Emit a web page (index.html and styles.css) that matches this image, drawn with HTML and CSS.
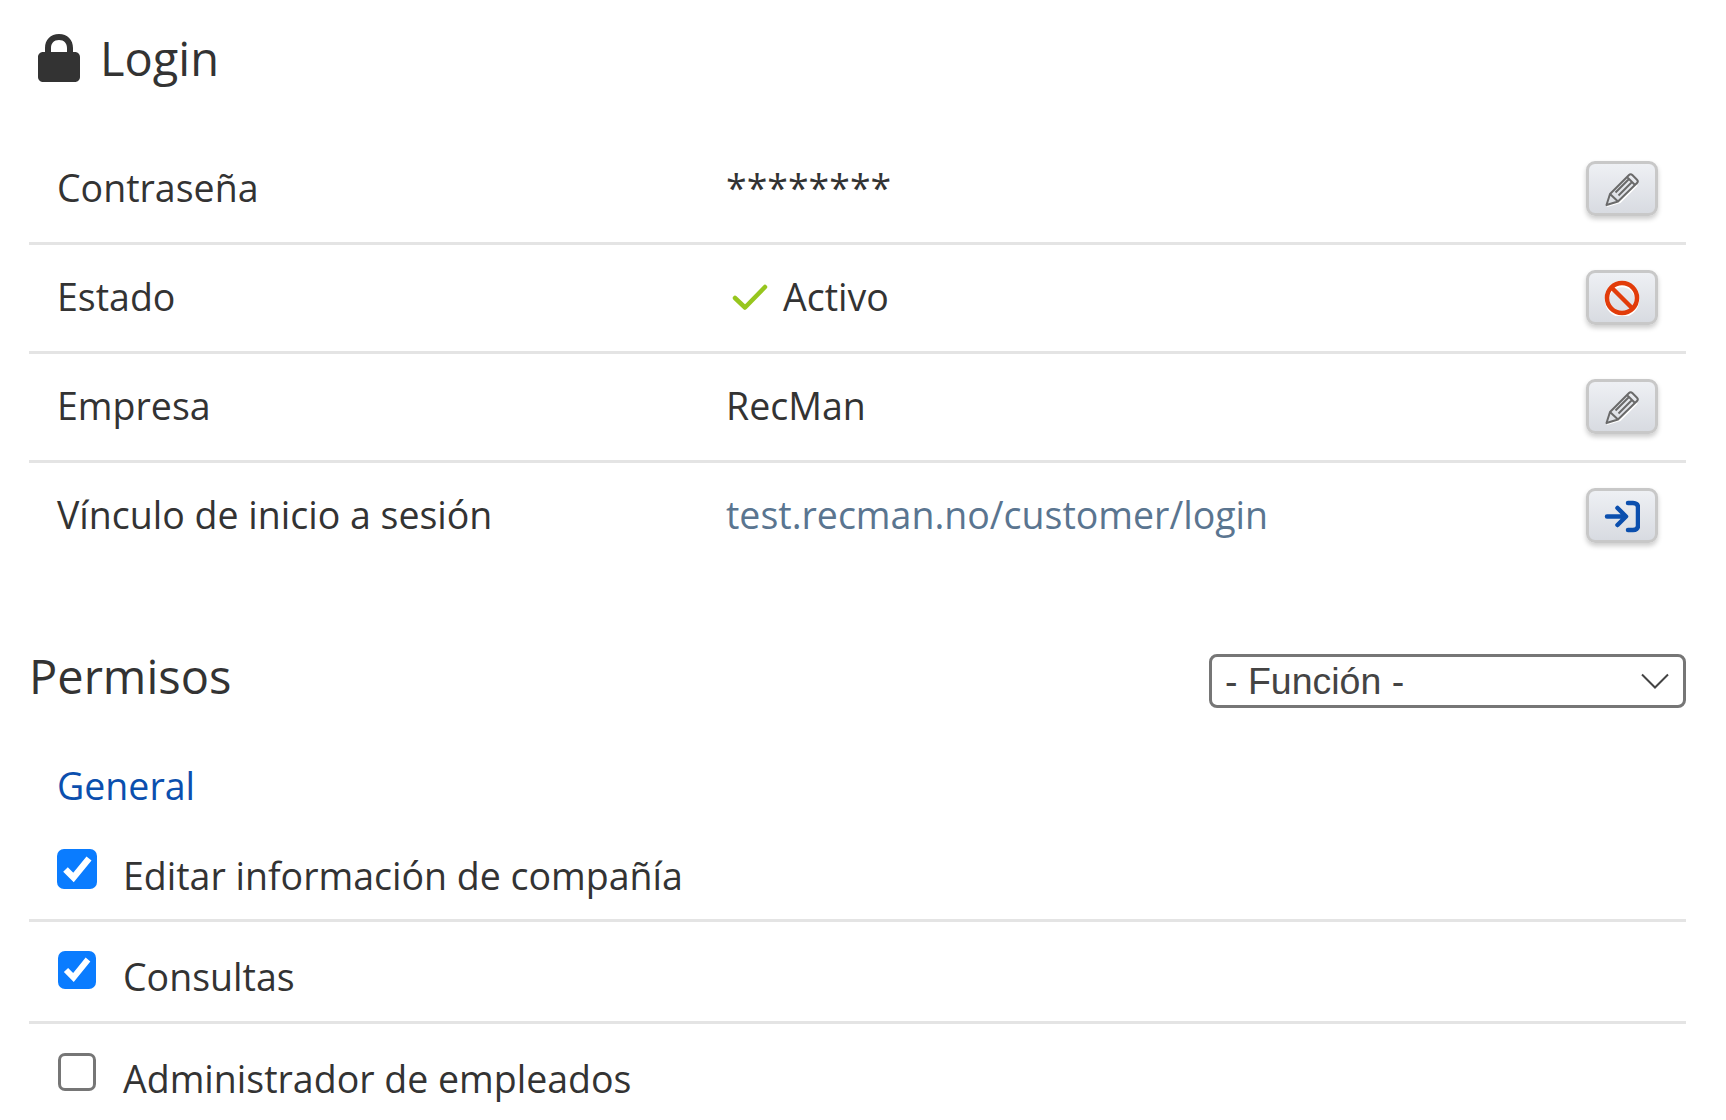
FILE: index.html
```html
<!DOCTYPE html>
<html lang="es">
  <head>
    <meta charset="UTF-8" />
    <meta name="viewport" content="width=device-width, initial-scale=1.0" />
    <title>Login</title>
    <link rel="stylesheet" href="styles.css">
  </head>
  <body>
    <div class="container">
      <h2 class="title">
        <svg class="lock" viewBox="0 0 42 48" width="42" height="48">
          <path fill="#333" d="M21 0C12.5 0 7 5.8 7 14v4H5c-2.8 0-5 2.2-5 5v20c0 2.800 2.200 5 5 5h32c2.800 0 5-2.200 5-5V23c0-2.800-2.200-5-5-5h-2v-4C35 5.800 29.500 0 21 0zm0 6c5.200 0 8 3.400 8 8v4H13v-4c0-4.600 2.800-8 8-8z"/>
        </svg>
        Login
      </h2>

      <div class="rows">
        <div class="row">
          <div class="label">Contraseña</div>
          <div class="value stars">********</div>
          <button class="btn" type="button">
            <svg viewBox="0 0 36 36" width="36" height="36">
              <path class="glow" d="M3 35l13-4 17-17"/>
              <path class="pencil" d="M2.500 34l3.500-11L25 4c1-1 2.300-1 3.300 0l4.700 4.700c1 1 1 2.300 0 3.300L14 30.500zM6 23l8 7.500M23 6l8 8M11.500 21.500L25.500 7.500M14.500 24.500L28.500 10.500"/>
            </svg>
          </button>
        </div>
        <div class="row">
          <div class="label">Estado</div>
          <div class="value status">
            <svg viewBox="0 0 36 28" width="36" height="28">
              <path d="M3 15l10 9.500L33 4" fill="none" stroke="#97c61e" stroke-width="4.500" stroke-linecap="round" stroke-linejoin="round"/>
            </svg>
            <span>Activo</span>
          </div>
          <button class="btn" type="button">
            <svg viewBox="0 0 36 36" width="36" height="36">
              <circle cx="18" cy="20" r="15" fill="none" stroke="white" stroke-width="4.500"/>
              <circle cx="18" cy="18" r="15" fill="none" stroke="#e23c0a" stroke-width="4.500"/>
              <path d="M7.500 7.500l21 21" stroke="#e23c0a" stroke-width="4.500"/>
            </svg>
          </button>
        </div>
        <div class="row">
          <div class="label">Empresa</div>
          <div class="value">RecMan</div>
          <button class="btn" type="button">
            <svg viewBox="0 0 36 36" width="36" height="36">
              <path class="glow" d="M3 35l13-4 17-17"/>
              <path class="pencil" d="M2.500 34l3.500-11L25 4c1-1 2.300-1 3.300 0l4.700 4.700c1 1 1 2.300 0 3.300L14 30.500zM6 23l8 7.500M23 6l8 8M11.500 21.500L25.500 7.500M14.500 24.500L28.500 10.500"/>
            </svg>
          </button>
        </div>
        <div class="row">
          <div class="label">Vínculo de inicio a sesión</div>
          <div class="value"><a class="link" href="#">test.recman.no/customer/login</a></div>
          <button class="btn" type="button">
            <svg viewBox="0 0 36 36" width="36" height="36">
              <path d="M3 18.500h18.500M13.500 10l8.500 8.500-8.500 8.500M24 5h5c3 0 5 1.500 5 4v19c0 2.500-2 4-5 4h-5" fill="none" stroke="#0b4fae" stroke-width="4.500" stroke-linecap="round" stroke-linejoin="round"/>
            </svg>
          </button>
        </div>
      </div>

      <div class="perm-head">
        <h3>Permisos</h3>
        <div class="select">
          <span>- Función -</span>
          <svg viewBox="0 0 28 16" width="28" height="16">
            <path d="M1 1.500l13 13 13-13" fill="none" stroke="#444" stroke-width="2"/>
          </svg>
        </div>
      </div>

      <div class="group-name">General</div>

      <div class="check-row big">
        <span class="box checked">
          <svg viewBox="0 0 40 40"><path d="M8.500 20.500l8 8L32 9.500" fill="none" stroke="#fff" stroke-width="6.500"/></svg>
        </span>
        <span class="check-text">Editar información de compañía</span>
      </div>
      <div class="check-row">
        <span class="box checked">
          <svg viewBox="0 0 38 38"><path d="M8 19l7.500 7.500L30 8.500" fill="none" stroke="#fff" stroke-width="6"/></svg>
        </span>
        <span class="check-text">Consultas</span>
      </div>
      <div class="check-row last">
        <span class="box"></span>
        <span class="check-text">Administrador de empleados</span>
      </div>
    </div>
  </body>
</html>
```

FILE: styles.css
```css
html,
body {
  margin: 0;
  padding: 0;
  background-color: white;
}
body {
  font-family: "Open Sans", sans-serif;
  color: #333;
}
.container {
  height: 1120px;
  overflow: hidden;
  padding: 0 40px 0 29px;
}
.title {
  display: flex;
  align-items: center;
  gap: 20px;
  height: 136px;
  margin: 0 0 0 9px;
  padding-bottom: 20px;
  box-sizing: border-box;
  font-size: 47px;
  font-weight: 400;
}
.lock {
  flex: none;
}
.row {
  display: flex;
  align-items: center;
  height: 109px;
  box-sizing: border-box;
  padding: 0 28px 0 28px;
  border-bottom: 3px solid #e4e4e4;
  font-size: 37.5px;
}
.row:last-child {
  border-bottom-color: transparent;
}
.label {
  width: 669px;
  flex: none;
  margin-bottom: 3px;
}
.value {
  flex: 1;
  margin-bottom: 3px;
}
.stars {
  margin-bottom: 3px;
}
.status {
  display: flex;
  align-items: center;
  gap: 15px;
  padding-left: 6px;
}
.link {
  color: #5a7590;
  text-decoration: none;
}
.btn {
  width: 72px;
  height: 55px;
  padding: 0;
  margin-bottom: 1px;
  display: flex;
  align-items: center;
  justify-content: center;
  border: 3px solid #c8c8c8;
  border-radius: 9px;
  background: linear-gradient(#eef0f4, #d8dbe1);
  box-shadow: 0 3px 5px rgba(0, 0, 0, 0.2);
}
.pencil {
  fill: none;
  stroke: #6a6a6a;
  stroke-width: 2;
  stroke-linejoin: round;
}
.glow {
  fill: none;
  stroke: white;
  stroke-width: 2;
}
.perm-head {
  display: flex;
  align-items: center;
  justify-content: space-between;
  margin-top: 77px;
}
.perm-head h3 {
  margin: 0;
  padding-bottom: 10px;
  line-height: 54px;
  font-size: 47px;
  font-weight: 400;
}
.select {
  width: 477px;
  height: 54px;
  box-sizing: border-box;
  display: flex;
  align-items: center;
  justify-content: space-between;
  padding: 0 14px 0 13px;
  border: 3px solid #767676;
  border-radius: 8px;
  font-family: "Liberation Sans", sans-serif;
  font-size: 37.5px;
  color: #444;
}
.group-name {
  margin: 47px 0 0 28px;
  font-size: 37.5px;
  color: #0b4fae;
}
.check-row {
  display: flex;
  height: 102px;
  box-sizing: border-box;
  padding: 29px 0 0 28px;
  border-bottom: 3px solid #e4e4e4;
  font-size: 37.5px;
}
.check-row.big {
  height: 111px;
  padding-top: 38px;
}
.check-row.last {
  border-bottom: none;
}
.box {
  width: 38px;
  height: 38px;
  flex: none;
  box-sizing: border-box;
  margin: 0 27px 0 1px;
  border: 3px solid #767676;
  border-radius: 7px;
}
.box.checked {
  background-color: #0a7cff;
  border: none;
}
.box svg {
  display: block;
}
.big .box {
  width: 40px;
  height: 40px;
  margin: 0 26px 0 0;
}
.check-text {
  line-height: 50px;
  margin-top: 1px;
}
.big .check-text {
  margin-top: 2px;
}
```
